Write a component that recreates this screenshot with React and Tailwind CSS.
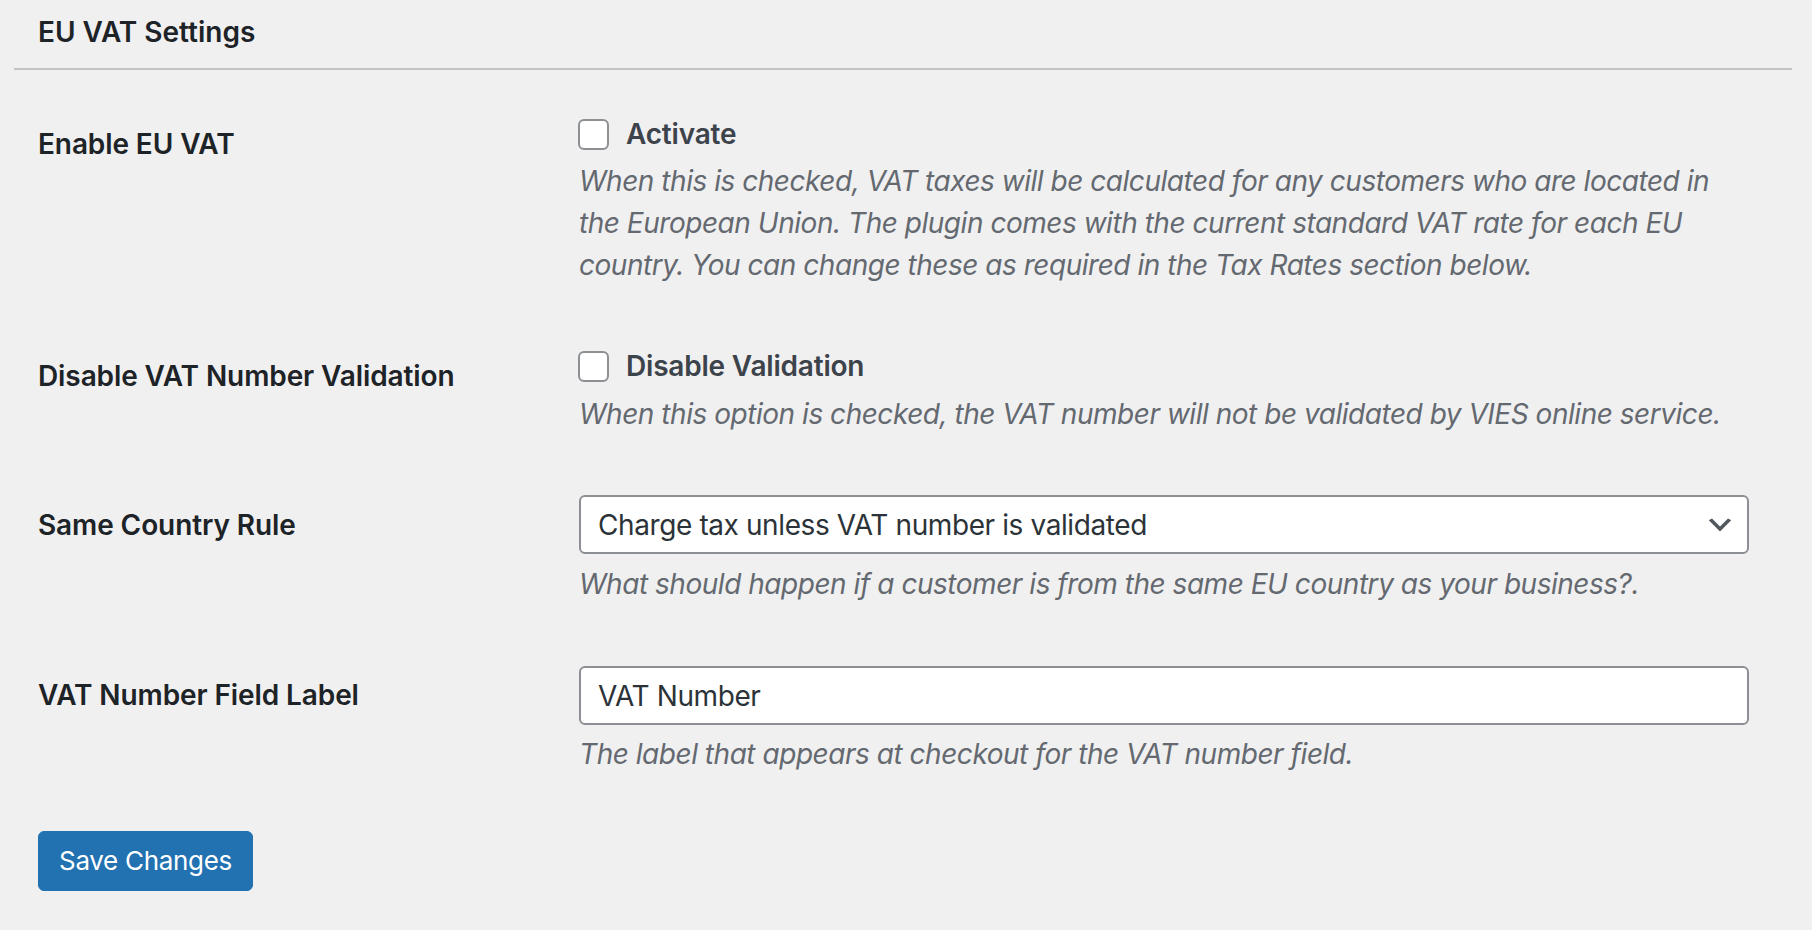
import React from "react";

function Checkbox() {
  return (
    <span className="block w-[31px] h-[31px] shrink-0 rounded-[6px] border-2 border-[#8c8f94] bg-white" />
  );
}

function Chevron() {
  return (
    <svg width="32" height="32" viewBox="0 0 20 20" className="shrink-0">
      <path d="M5 6l5 5 5-5 2 1-7 7-7-7 2-1z" fill="#50575e" />
    </svg>
  );
}

function Desc({ lines, className = "" }) {
  return (
    <div className={"text-[28px] leading-[42px] italic tracking-[-0.47px] text-[#646970] " + className}>
      {lines.map((l, i) => (
        <div key={i} className="whitespace-nowrap">{l}</div>
      ))}
    </div>
  );
}

function Row({ label, labelPt, mt, children }) {
  return (
    <div className={"flex pl-[24px] " + mt}>
      <div className={"w-[540px] shrink-0 text-[28px] leading-[42px] font-semibold tracking-[-0.1px] text-[#1d2327] " + labelPt}>
        {label}
      </div>
      <div className="flex-1 min-w-0">{children}</div>
    </div>
  );
}

export default function App() {
  return (
    <div className="min-h-[930px] bg-[#f0f0f1] font-['Inter',sans-serif] pl-[14px] pr-[20px] pt-[14px]">
      <h2 className="pl-[24px] text-[28px] leading-[36px] font-semibold text-[#1d2327]">EU VAT Settings</h2>
      <div className="mt-[18px] h-[2px] bg-[#c3c4c7]" />

      <Row label="Enable EU VAT" labelPt="pt-[5px]" mt="mt-[48px]">
        <div className="flex items-center h-[32px] gap-[17px]">
          <Checkbox />
          <span className="text-[28px] font-semibold tracking-[-0.2px] text-[#3c434a]">Activate</span>
        </div>
        <Desc
          className="mt-[10px] pl-[1px]"
          lines={[
            "When this is checked, VAT taxes will be calculated for any customers who are located in",
            "the European Union. The plugin comes with the current standard VAT rate for each EU",
            "country. You can change these as required in the Tax Rates section below.",
          ]}
        />
      </Row>

      <Row label="Disable VAT Number Validation" labelPt="pt-[5px]" mt="mt-[64px]">
        <div className="flex items-center h-[32px] gap-[17px]">
          <Checkbox />
          <span className="text-[28px] font-semibold tracking-[-0.2px] text-[#3c434a]">Disable Validation</span>
        </div>
        <Desc
          className="mt-[11px] pl-[1px]"
          lines={["When this option is checked, the VAT number will not be validated by VIES online service."]}
        />
      </Row>

      <Row label="Same Country Rule" labelPt="pt-[9px]" mt="mt-[60px]">
        <div className="ml-[1px] w-[1170px] h-[59px] flex items-center justify-between rounded-[6px] border-2 border-[#8c8f94] bg-white pl-[17px] pr-[11px]">
          <span className="text-[28px] tracking-[-0.4px] text-[#2c3338]">Charge tax unless VAT number is validated</span>
          <Chevron />
        </div>
        <Desc
          className="mt-[9px] pl-[1px]"
          lines={["What should happen if a customer is from the same EU country as your business?."]}
        />
      </Row>

      <Row label="VAT Number Field Label" labelPt="pt-[8px]" mt="mt-[61px]">
        <div className="ml-[1px] w-[1170px] h-[59px] flex items-center rounded-[6px] border-2 border-[#8c8f94] bg-white pl-[17px]">
          <span className="text-[28px] tracking-[-0.4px] text-[#2c3338]">VAT Number</span>
        </div>
        <Desc
          className="mt-[8px] pl-[1px]"
          lines={["The label that appears at checkout for the VAT number field."]}
        />
      </Row>

      <div className="pl-[24px] mt-[56px] pb-[39px]">
        <button className="h-[60px] px-[20px] rounded-[6px] bg-[#2271b1] text-white text-[26px] tracking-[-0.3px] leading-[56px] border border-[#2271b1]">
          Save Changes
        </button>
      </div>
    </div>
  );
}
